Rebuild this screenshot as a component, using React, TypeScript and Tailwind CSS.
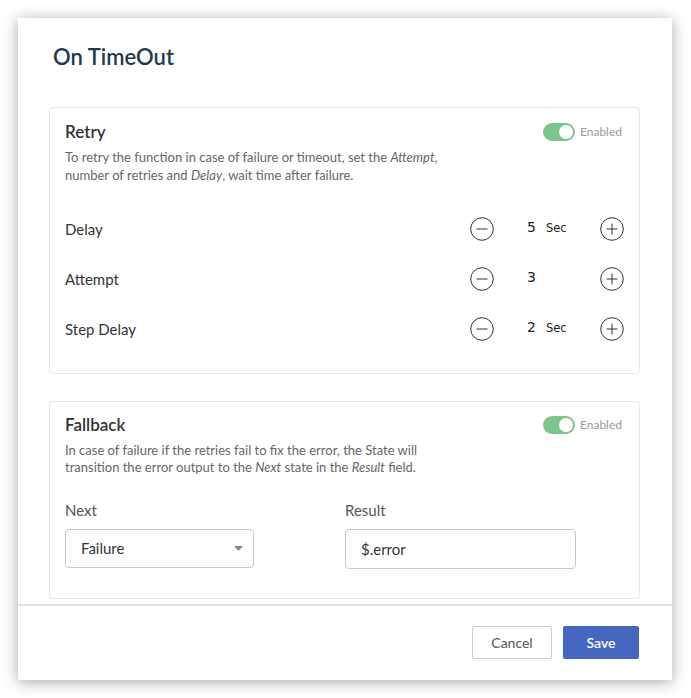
import React from 'react';

const Toggle: React.FC = () => (
  <div className="flex items-center gap-[5px]">
    <div className="w-[32px] h-[18px] rounded-full bg-[#7cc58b] flex items-center justify-end pr-[2px]">
      <div className="w-[14px] h-[14px] rounded-full bg-white" />
    </div>
    <span className="text-[12px] text-[#9a9a9a]">Enabled</span>
  </div>
);

const CircleBtn: React.FC<{ plus?: boolean }> = ({ plus }) => (
  <svg width="24" height="24" viewBox="0 0 24 24" className="shrink-0">
    <circle cx="12" cy="12" r="11.3" fill="none" stroke="#333" strokeWidth="1" />
    <line x1="6.5" y1="12" x2="17.5" y2="12" stroke="#333" strokeWidth="1" />
    {plus && <line x1="12" y1="6.5" x2="12" y2="17.5" stroke="#333" strokeWidth="1" />}
  </svg>
);

const StepRow: React.FC<{ label: string; value: number; unit?: string }> = ({ label, value, unit }) => (
  <div className="h-[50px] flex items-center">
    <span className="flex-1 text-[15px] text-[#333]">{label}</span>
    <CircleBtn />
    <div className="w-[106px] pl-[33px] flex items-baseline -mt-[4px] font-['DejaVu_Sans',sans-serif] text-[#222]">
      <span className="text-[14px]">{value}</span>
      {unit && <span className="text-[11.5px] ml-[10px]">{unit}</span>}
    </div>
    <CircleBtn plus />
  </div>
);

export default function App() {
  return (
    <div className="w-[691px] h-[698px] bg-white p-[18px] font-['Lato',sans-serif]">
      <div className="w-[654px] h-[662px] bg-white flex flex-col shadow-[0_2px_14px_rgba(0,0,0,0.35)]">
        {/* body */}
        <div className="flex-1 overflow-hidden pl-[31px] pr-[32px] pt-[27px]">
          <h1 className="pl-[4px] text-[22px] font-semibold text-[#1f3a4c] leading-[24px]">On TimeOut</h1>

          {/* retry */}
          <div className="mt-[38px] border border-[#e1e7f5] rounded-[4px] px-[15px] pt-[13px] pb-[19px]">
            <div className="flex items-center justify-between h-[22px]">
              <h2 className="text-[17px] font-semibold text-[#333]">Retry</h2>
              <div className="pr-[2px]"><Toggle /></div>
            </div>
            <p className="mt-[5px] text-[13px] leading-[18px] text-[#666]">
              To retry the function in case of failure or timeout, set the <i>Attempt</i>,<br />
              number of retries and <i>Delay</i>, wait time after failure.
            </p>
            <div className="mt-[20px]">
              <StepRow label="Delay" value={5} unit="Sec" />
              <StepRow label="Attempt" value={3} />
              <StepRow label="Step Delay" value={2} unit="Sec" />
            </div>
          </div>

          {/* fallback */}
          <div className="mt-[27px] border border-[#e1e7f5] rounded-[4px] px-[15px] pt-[12px] pb-[29px]">
            <div className="flex items-center justify-between h-[22px]">
              <h2 className="text-[17px] font-semibold text-[#333]">Fallback</h2>
              <div className="pr-[2px]"><Toggle /></div>
            </div>
            <p className="mt-[6px] text-[13px] leading-[17px] text-[#666]">
              In case of failure if the retries fail to fix the error, the State will<br />
              transition the error output to the <i>Next</i> state in the <i>Result</i> field.
            </p>
            <div className="mt-[25px] flex">
              <div className="w-[280px]">
                <div className="text-[15px] text-[#555] leading-[18px]">Next</div>
                <div className="mt-[10px] w-[189px] h-[39px] border border-[#c8c8c8] rounded-[4px] flex items-center justify-between pl-[15px] pr-[10px]">
                  <span className="text-[15px] text-[#333]">Failure</span>
                  <svg width="9" height="5" viewBox="0 0 9 5"><path d="M0 0 L9 0 L4.5 5 Z" fill="#888" /></svg>
                </div>
              </div>
              <div>
                <div className="text-[15px] text-[#555] leading-[18px]">Result</div>
                <div className="mt-[10px] w-[231px] h-[40px] border border-[#c8c8c8] rounded-[4px] flex items-center pl-[15px]">
                  <span className="text-[15px] text-[#333]">$.error</span>
                </div>
              </div>
            </div>
          </div>
        </div>

        {/* footer */}
        <div className="h-[76px] border-t-2 border-[#e0e0e0] flex items-center justify-end gap-[11px] pr-[33px] pb-[1px]">
          <button className="w-[80px] h-[33px] border border-[#cfcfcf] rounded-[2px] bg-white text-[14px] text-[#555]">Cancel</button>
          <button className="w-[76px] h-[33px] rounded-[2px] bg-[#4567c0] text-[14px] font-semibold text-white">Save</button>
        </div>
      </div>
    </div>
  );
}
